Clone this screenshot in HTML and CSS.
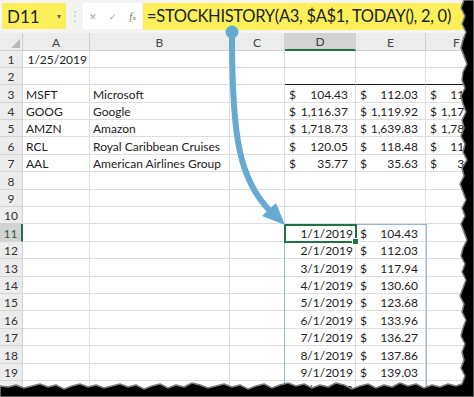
FILE: index.html
```html
<!DOCTYPE html>
<html lang="en">
<head>
    <meta charset="UTF-8">
    <title>STOCKHISTORY</title>
    <link rel="stylesheet" href="styles.css">
</head>
<body>
<div class="screen">
    <div class="formula-row">
        <div class="name-box">D11<span class="caret">&#9662;</span></div>
        <span class="grip">&#8942;</span>
        <div class="fx-buttons">
            <span>&#10005;</span>
            <span>&#10003;</span>
            <span class="fx"><i>f</i><small>x</small></span>
        </div>
        <div class="formula">=STOCKHISTORY(A3, $A$1, TODAY(), 2, 0)</div>
    </div>

    <div class="sheet">
        <table class="grid">
            <colgroup>
                <col class="c-row">
                <col class="c-a">
                <col class="c-b">
                <col class="c-c">
                <col class="c-d">
                <col class="c-e">
                <col class="c-f">
            </colgroup>
            <thead>
            <tr>
                <th class="corner"><svg width="9" height="9" viewBox="0 0 9 9"><polygon points="9,0 9,9 0,9" fill="#b9b9b9"/></svg></th>
                <th>A</th><th>B</th><th>C</th><th class="sel">D</th><th>E</th><th class="last">F</th>
            </tr>
            </thead>
            <tbody>
            <tr><th>1</th><td class="r">1/25/2019</td><td></td><td></td><td></td><td></td><td></td></tr>
            <tr><th>2</th><td></td><td></td><td></td><td class="rule"></td><td class="rule"></td><td class="rule"></td></tr>
            <tr><th>3</th><td>MSFT</td><td>Microsoft</td><td></td>
                <td class="num"><span class="cur">$</span>104.43</td><td class="num"><span class="cur">$</span>112.03</td><td class="num"><span class="cur">$</span>117.94</td></tr>
            <tr><th>4</th><td>GOOG</td><td>Google</td><td></td>
                <td class="num"><span class="cur">$</span>1,116.37</td><td class="num"><span class="cur">$</span>1,119.92</td><td class="num"><span class="cur">$</span>1,173.31</td></tr>
            <tr><th>5</th><td>AMZN</td><td>Amazon</td><td></td>
                <td class="num"><span class="cur">$</span>1,718.73</td><td class="num"><span class="cur">$</span>1,639.83</td><td class="num"><span class="cur">$</span>1,780.75</td></tr>
            <tr><th>6</th><td>RCL</td><td>Royal Caribbean Cruises</td><td></td>
                <td class="num"><span class="cur">$</span>120.05</td><td class="num"><span class="cur">$</span>118.48</td><td class="num"><span class="cur">$</span>114.62</td></tr>
            <tr><th>7</th><td>AAL</td><td>American Airlines Group</td><td></td>
                <td class="num"><span class="cur">$</span>35.77</td><td class="num"><span class="cur">$</span>35.63</td><td class="num"><span class="cur">$</span>31.72</td></tr>
            <tr><th>8</th><td></td><td></td><td></td><td></td><td></td><td></td></tr>
            <tr><th>9</th><td></td><td></td><td></td><td></td><td></td><td></td></tr>
            <tr><th>10</th><td></td><td></td><td></td><td></td><td></td><td></td></tr>
            <tr><th class="sel">11</th><td></td><td></td><td></td><td class="date">1/1/2019</td><td class="num"><span class="cur">$</span>104.43</td><td></td></tr>
            <tr><th>12</th><td></td><td></td><td></td><td class="date">2/1/2019</td><td class="num"><span class="cur">$</span>112.03</td><td></td></tr>
            <tr><th>13</th><td></td><td></td><td></td><td class="date">3/1/2019</td><td class="num"><span class="cur">$</span>117.94</td><td></td></tr>
            <tr><th>14</th><td></td><td></td><td></td><td class="date">4/1/2019</td><td class="num"><span class="cur">$</span>130.60</td><td></td></tr>
            <tr><th>15</th><td></td><td></td><td></td><td class="date">5/1/2019</td><td class="num"><span class="cur">$</span>123.68</td><td></td></tr>
            <tr><th>16</th><td></td><td></td><td></td><td class="date">6/1/2019</td><td class="num"><span class="cur">$</span>133.96</td><td></td></tr>
            <tr><th>17</th><td></td><td></td><td></td><td class="date">7/1/2019</td><td class="num"><span class="cur">$</span>136.27</td><td></td></tr>
            <tr><th>18</th><td></td><td></td><td></td><td class="date">8/1/2019</td><td class="num"><span class="cur">$</span>137.86</td><td></td></tr>
            <tr><th>19</th><td></td><td></td><td></td><td class="date">9/1/2019</td><td class="num"><span class="cur">$</span>139.03</td><td></td></tr>
            <tr><th>20</th><td></td><td></td><td></td><td class="date">10/1/2019</td><td class="num"><span class="cur">$</span>143.37</td><td></td></tr>
            </tbody>
        </table>
        <!-- spill range and active cell sit on top of the grid -->
        <div class="spill"></div>
        <div class="active-cell"><span class="handle"></span></div>
    </div>

    <svg class="arrow" viewBox="0 0 474 397" width="474" height="397">
        <path d="M232 36 C232 140, 240 180, 270 211" fill="none" stroke="#64aad1" stroke-width="6"/>
        <circle cx="232" cy="32" r="6.5" fill="#64aad1"/>
        <polygon points="285,225 276,203 262,216" fill="#64aad1"/>
    </svg>

    <svg class="torn" viewBox="0 0 474 397" width="474" height="397">
        <polygon fill="#000" stroke="#7a7a7a" stroke-width="1.5" stroke-linejoin="round"
                 points="474,0 464,0 461,8 465,16 462,24 466,32 463,40 461,48 464,56 467,64 463,72 462,80 465,88 461,96 463,104 466,112 462,120 464,128 461,136 465,144 463,152 467,160 462,168 464,176 460,184 463,192 466,200 462,208 465,216 461,224 464,232 467,240 463,248 461,256 465,264 462,272 466,280 463,288 460,296 464,304 462,312 466,320 463,328 461,336 465,344 462,352 464,360 461,368 465,376 462,384 456,386 448,384 440,387 432,385 424,388 416,384 408,386 400,383 392,387 384,385 376,388 368,384 360,386 352,389 344,385 336,383 328,387 320,385 312,388 304,384 296,386 288,383 280,385 272,388 264,384 256,386 248,389 240,385 232,387 224,384 216,386 208,388 200,385 192,383 184,387 176,385 168,388 160,384 152,386 144,389 136,385 128,387 120,384 112,386 104,388 96,385 88,387 80,384 72,386 64,389 56,385 48,387 40,384 32,386 24,388 16,385 8,387 0,386 0,397 474,397"/>
    </svg>
</div>
</body>
</html>
```

FILE: styles.css
```css
body {
    margin: 0;
    font-family: Lato, "Liberation Sans", sans-serif;
    background: #fff;
}
.screen {
    position: relative;
    width: 474px;
    height: 397px;
    overflow: hidden;
    background: #fff;
}

/* formula bar */
.formula-row {
    height: 33px;
    box-sizing: border-box;
    padding-top: 3px;
    display: flex;
    align-items: flex-start;
    background: #f3f3f3;
}
.formula-row > * {
    flex-shrink: 0;
}
.name-box {
    margin-left: 2px;
    width: 64px;
    height: 26px;
    box-sizing: border-box;
    padding-left: 5px;
    display: flex;
    align-items: center;
    background: #fbf05a;
    font-size: 17px;
    color: #222;
}
.caret {
    margin-left: auto;
    margin-right: 5px;
    font-size: 8px;
    color: #666;
}
.grip {
    width: 17px;
    text-align: center;
    line-height: 26px;
    font-size: 12px;
    color: #c8c8c8;
}
.fx-buttons {
    width: 59px;
    height: 26px;
    display: flex;
    justify-content: space-around;
    align-items: center;
    background: #fff;
    color: #a6a6a6;
    font-size: 9px;
}
.fx {
    font-family: "Liberation Serif", serif;
    font-size: 11px;
    color: #777;
}
.fx small {
    font-size: 7px;
}
.formula {
    flex: 1 1 auto;
    min-width: 0;
    height: 27px;
    margin-left: 1px;
    padding-left: 4px;
    line-height: 27px;
    background: #fbf05a;
    font-size: 16.5px;
    letter-spacing: -0.3px;
    color: #222;
    white-space: nowrap;
    overflow: hidden;
}

/* grid */
.sheet {
    position: relative;
}
.grid {
    border-spacing: 0;
    table-layout: fixed;
    width: 496px;
    font-size: 12px;
    color: #222;
}
.c-row { width: 23px; }
.c-a { width: 67px; }
.c-b { width: 140px; }
.c-c { width: 55px; }
.c-d { width: 71px; }
.c-e { width: 70px; }
.c-f { width: 70px; }

.grid th,
.grid td {
    box-sizing: border-box;
    height: 17.4px;
    padding: 0 3px;
    border-right: 1px solid #dedede;
    border-bottom: 1px solid #dedede;
    line-height: 15px;
    vertical-align: bottom;
    white-space: nowrap;
    overflow: hidden;
}
.grid thead th {
    height: 17.5px;
    background: #ececec;
    border-color: #d0d0d0;
    font-weight: normal;
    color: #444;
    text-align: center;
}
.grid thead th.corner {
    text-align: right;
    padding: 0 2px 2px 0;
    line-height: 0;
}
.grid thead th.last {
    text-align: left;
    padding-left: 27px;
}
.grid thead th.sel {
    background: #d3d3d3;
    border-bottom: 2px solid #217346;
    color: #3e3e3e;
}
.grid tbody th {
    background: #ececec;
    border-color: #d4d4d4;
    font-weight: normal;
    color: #333;
    text-align: center;
    padding: 0;
}
.grid tbody th.sel {
    background: #d3d3d3;
    border-right: 2px solid #217346;
    color: #2c5e3f;
}
.grid td.r,
.grid td.date {
    text-align: right;
    padding-right: 2px;
}
.grid td.num {
    text-align: right;
    padding: 0 7px 0 4px;
}
.cur {
    float: left;
}
.grid td.rule {
    border-bottom-color: #1a1a1a;
}

.spill {
    position: absolute;
    left: 284px;
    top: 191px;
    width: 141px;
    height: 200px;
    border: 1px solid #98b6d8;
    pointer-events: none;
}
.active-cell {
    position: absolute;
    left: 284px;
    top: 190.5px;
    width: 73px;
    height: 19px;
    box-sizing: border-box;
    border: 2px solid #217346;
}
.handle {
    position: absolute;
    right: -4px;
    bottom: -4px;
    width: 5px;
    height: 5px;
    background: #217346;
    border: 1px solid #fff;
}

.arrow,
.torn {
    position: absolute;
    left: 0;
    top: 0;
    pointer-events: none;
}
```
